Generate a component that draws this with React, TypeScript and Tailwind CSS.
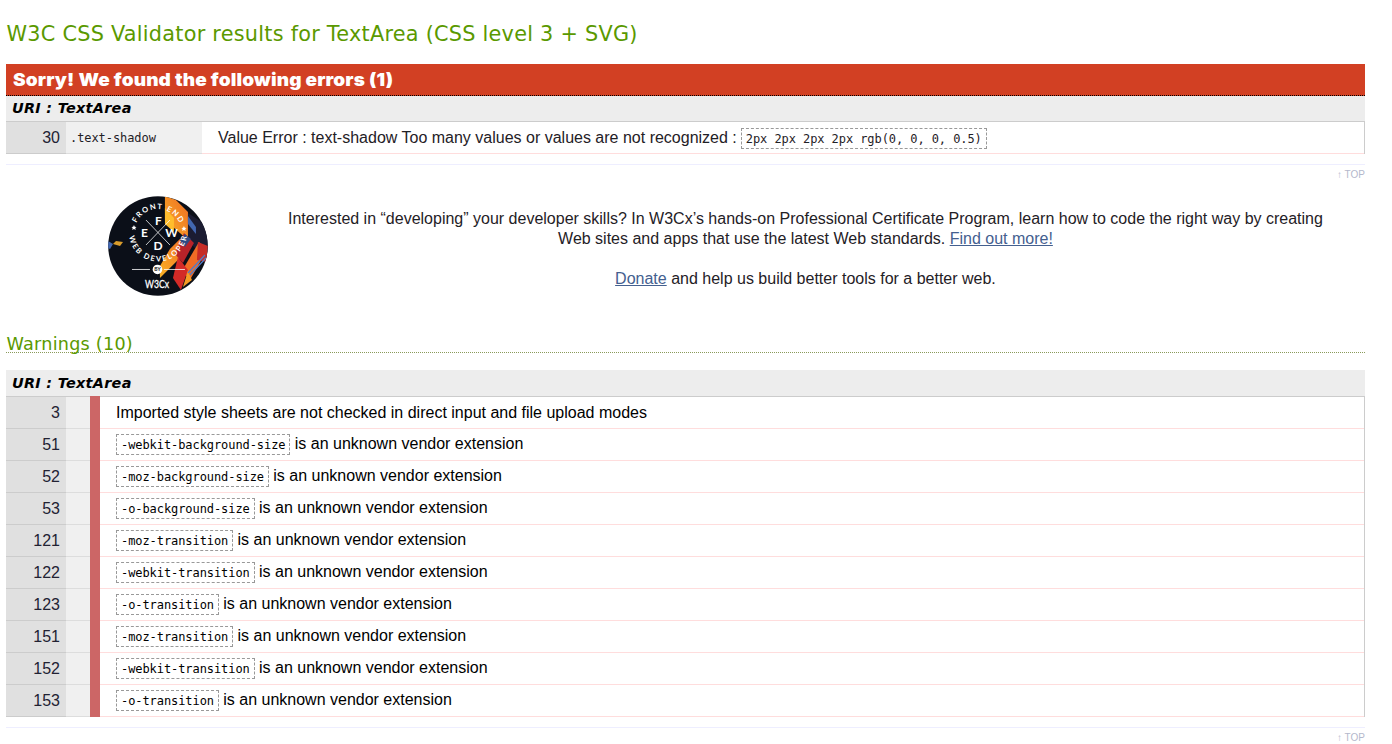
import type { ReactNode } from "react";

const vendorWarnings = [
  { line: 51, prop: "-webkit-background-size" },
  { line: 52, prop: "-moz-background-size" },
  { line: 53, prop: "-o-background-size" },
  { line: 121, prop: "-moz-transition" },
  { line: 122, prop: "-webkit-transition" },
  { line: 123, prop: "-o-transition" },
  { line: 151, prop: "-moz-transition" },
  { line: 152, prop: "-webkit-transition" },
  { line: 153, prop: "-o-transition" },
];

function Code({ children }: { children: ReactNode }) {
  return (
    <code className="mr-[4.3px] inline-block h-[21px] whitespace-pre border border-dashed border-[#999999] px-1 font-['DejaVu_Sans_Mono',monospace] text-[12px] leading-[20px] tracking-[-0.074px]">
      {children}
    </code>
  );
}

function UriHeading({ className }: { className: string }) {
  return (
    <h4
      className={`${className} border-b border-[#cccccc] bg-[#ededed] pl-[6px] font-['DejaVu_Sans',sans-serif] text-[14.4px] font-bold italic tracking-[0.3px] text-black`}
    >
      URI : TextArea
    </h4>
  );
}

function TopLink() {
  return (
    <div className="mt-[10px] h-[18px] border-t border-[#eeeeff] text-right text-[10px] leading-[20px] text-[#b4b8cc]">
      ↑ TOP
    </div>
  );
}

function WarningRow({ line, children }: { line: number; children: ReactNode }) {
  return (
    <div className="flex h-8 text-[16px]">
      <div className="w-[60px] border-b border-[#cccccc] bg-[#e0e0e0] pr-[6px] text-right leading-[31px] text-[#222233]">{line}</div>
      <div className="w-6 border-b border-[#dddddd] bg-[#f0f0f0]" />
      <div className="-mt-px w-[10px] bg-[#cc6666]" />
      <div className="flex flex-1 items-center border-b border-[#ffdddd] pl-4 text-black">{children}</div>
      <div className="w-px bg-[#cccccc]" />
    </div>
  );
}

function Badge() {
  return (
    <svg className="h-[100px] w-[100px]" viewBox="0 0 100 100" aria-hidden="true">
      <defs>
        <clipPath id="disc"><circle cx="50" cy="50" r="49.8" /></clipPath>
        <linearGradient id="flame" x1="0" y1="1" x2="1" y2="0">
          <stop offset="0" stopColor="#f9b226" />
          <stop offset="1" stopColor="#ef6b24" />
        </linearGradient>
        <path id="arcTop" d="M26.5 36.5 A23.5 23.5 0 0 1 73.5 36.5" />
        <path id="arcBottom" d="M21 36.5 A29 29 0 0 0 79 36.5" />
      </defs>
      <g clipPath="url(#disc)">
        <rect width="100" height="100" fill="#0b0f18" />
        <path d="M80 17 L100 30 V65 L80 45Z" fill="#1b1c32" />
        <path d="M57 0 L68 4 L80 16 V44 L57 24Z" fill="url(#flame)" />
        <path d="M57 12 L66 22 V36 L57 28Z" fill="#ffbd2d" />
        <path d="M80 20 L88 31 V38 L80 28Z" fill="#4267b1" />
        <path d="M72 43 L62 53 L52 70 V82 L71 63 L80 44Z" fill="url(#flame)" />
        <path d="M76 37 L86 47 L75 67 L67 58Z" fill="#b82329" />
        <path d="M77 38 L83 43 L77 51 L72 45Z" fill="#304a83" />
        <path d="M91 46 L99 54 L82 84 L74 75Z" fill="#ef6c25" />
        <path d="M90 46 L100 50 L99 66 L89 64Z" fill="#c62c27" />
        <path d="M70 61 L80 74 L73 94 L65 82Z" fill="#d32a27" />
        <path d="M80 75 L75 91 L84 84Z" fill="#f69b25" />
        <path d="M80 77 L97 59 M82 79 L98 62" stroke="#527bc6" strokeWidth="1.3" />
        <path d="M0 45 L5 48 L2 53 L0 52Z" fill="#4267b1" />
        <path d="M5 48 L8 45 L15 46 L12 50Z" fill="#d99c2c" />
        <path d="M38 24 L62 49 M62 24 L38 49" stroke="#fff" strokeWidth=".75" />
        <g fill="#fff" fontFamily="Lato, sans-serif" fontWeight="700" textAnchor="middle">
          <g fontSize="12">
            <text x="50.5" y="29">F</text>
            <text x="36.5" y="41">E</text>
            <text x="63.5" y="41">W</text>
            <text x="50" y="54">D</text>
          </g>
          <g fontSize="7.5">
            <text><textPath href="#arcTop" startOffset="50%" textLength="54" lengthAdjust="spacing">FRONT END</textPath></text>
            <text><textPath href="#arcBottom" startOffset="50%" textLength="83" lengthAdjust="spacing">WEB DEVELOPER</textPath></text>
          </g>
          <path d="M26 29 l.8 1.7 1.8.2 -1.3 1.2 .4 1.8 -1.7-.9 -1.7.9 .4-1.8 -1.3-1.2 1.8-.2z" />
          <path d="M76 30 l.8 1.7 1.8.2 -1.3 1.2 .4 1.8 -1.7-.9 -1.7.9 .4-1.8 -1.3-1.2 1.8-.2z" />
          <path d="M24 73.5 H42 M56 73.5 H77" stroke="#fff" strokeWidth=".8" />
          <circle cx="49.5" cy="73.5" r="4.8" />
          <text x="49.5" y="75.3" fontSize="5" fill="#111111">BY</text>
          <text x="49" y="92" fontSize="12" fontWeight="400" stroke="#fff" strokeWidth=".3" textLength="24" lengthAdjust="spacingAndGlyphs">W3Cx</text>
        </g>
      </g>
    </svg>
  );
}

export default function App() {
  return (
    <main className="flow-root h-[744px] w-[1365px] overflow-hidden bg-white pl-[6px] font-['Liberation_Sans',Arial,sans-serif] text-[16px] text-[#1f2126]">
      <h2 className="mt-[19px] h-[45px] whitespace-nowrap pl-[0.5px] font-['DejaVu_Sans',sans-serif] text-[20.8px] leading-[30px] tracking-[0.25px] text-[#5a9900]">
        W3C CSS Validator results for TextArea (CSS level 3 + SVG)
      </h2>

      <section>
        <h3 className="h-8 border-b border-dotted border-black bg-[#d24023] pl-[7px] font-['Inter',sans-serif] text-[17.6px] font-black leading-[31px] tracking-[0.13px] text-white">
          <span className="inline-block origin-left scale-x-[1.08]">Sorry! We found the following errors (1)</span>
        </h3>
        <UriHeading className="h-[26px] leading-[24px]" />
        <div className="flex h-8">
          <div className="w-[60px] border-b border-[#cccccc] bg-[#e0e0e0] pr-[6px] text-right leading-[31px] text-[#222233]">30</div>
          <div className="w-[136px] border-b border-[#dddddd] bg-[#f0f0f0] pl-1 font-['DejaVu_Sans_Mono',monospace] text-[12px] leading-[32px] tracking-[-0.074px]">
            .text-shadow
          </div>
          <div className="flex flex-1 items-center border-b border-[#ffdddd] pl-4 pt-[2px]">
            <span className="mr-1 whitespace-nowrap pb-px">Value Error : text-shadow Too many values or values are not recognized :</span>
            <Code>2px 2px 2px 2px rgb(0, 0, 0, 0.5)</Code>
          </div>
          <div className="w-px bg-[#cccccc]" />
        </div>
        <TopLink />
      </section>

      <section className="mt-[14px] flex h-[138px] pl-[102px]">
        <Badge />
        <div className="ml-[38px] mt-[13px] w-[1120px] text-center leading-[20px]">
          <p>
            Interested in “developing” your developer skills? In W3Cx’s hands-on Professional Certificate Program, learn how to code the right way by creating
            <br />
            Web sites and apps that use the latest Web standards. <a className="text-[#44608f] underline">Find out more!</a>
          </p>
          <p className="mt-5">
            <a className="text-[#44608f] underline">Donate</a> and help us build better tools for a better web.
          </p>
        </div>
      </section>

      <section>
        <h3 className="h-[19px] border-b border-dotted border-[#8a9a5a] pl-[0.5px] font-['DejaVu_Sans',sans-serif] text-[17.6px] leading-[20px] tracking-[0.25px] text-[#5a9900]">
          Warnings (10)
        </h3>
        <UriHeading className="mt-[17px] h-[27px] leading-[26px]" />
        <div>
          <WarningRow line={3}>Imported style sheets are not checked in direct input and file upload modes</WarningRow>
          {vendorWarnings.map((w) => (
            <WarningRow key={w.line} line={w.line}>
              <Code>{w.prop}</Code>
              <span className="pb-[2px]">is an unknown vendor extension</span>
            </WarningRow>
          ))}
        </div>
        <TopLink />
      </section>
    </main>
  );
}
